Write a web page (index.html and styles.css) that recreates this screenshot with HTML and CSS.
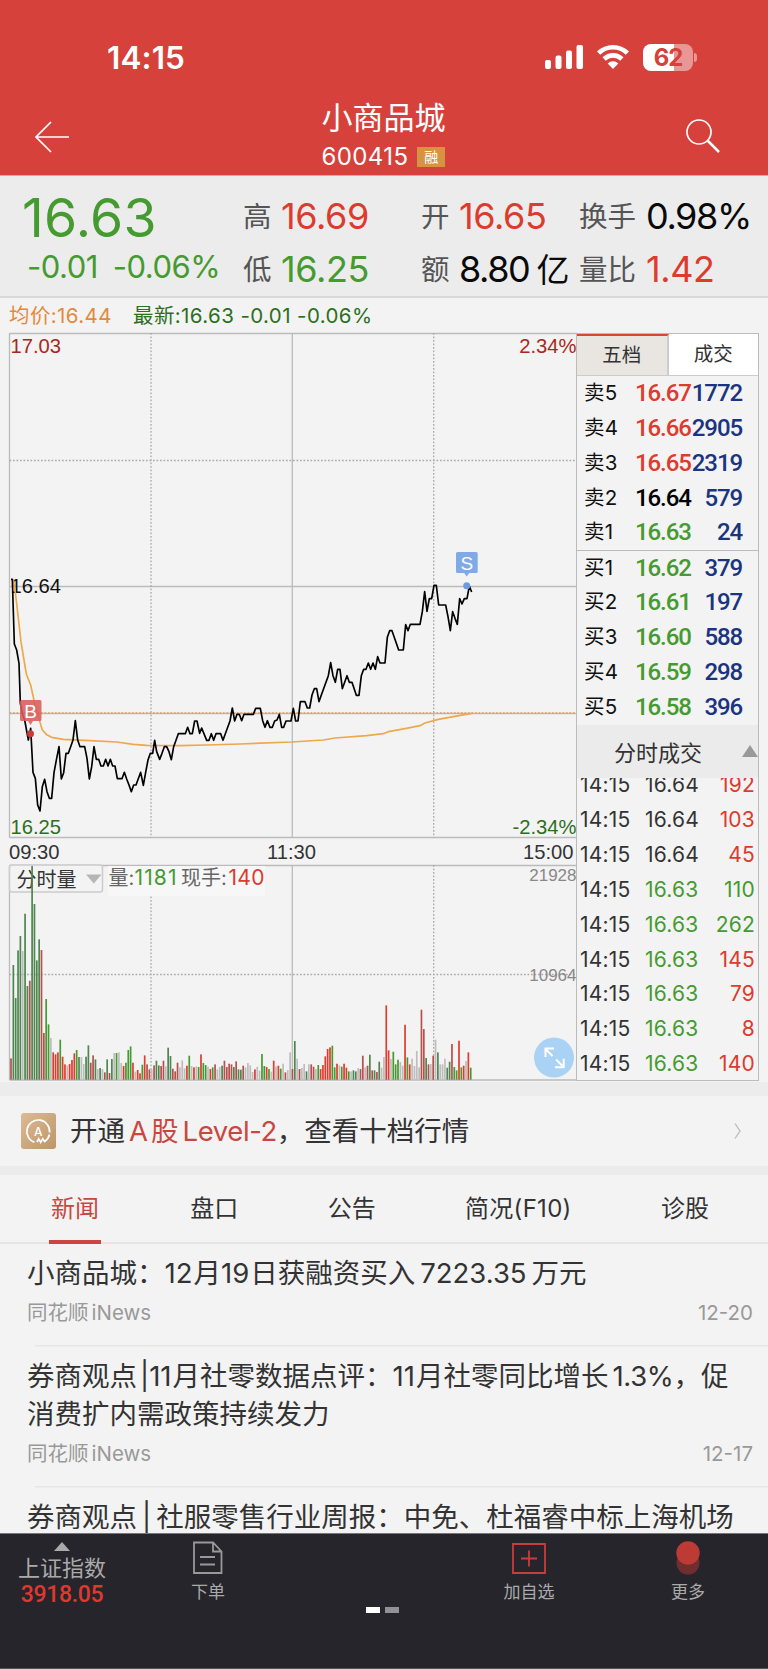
FILE: index.html
```
<!DOCTYPE html>
<html lang="zh-CN">
<head>
    <meta charset="UTF-8">
    <title>小商品城 600415</title>
    <link rel="stylesheet" href="styles.css">
</head>
<body>
    <header class="header">
        <div class="statusbar">
            <span class="clock">14:15</span>
            <div class="status-icons">
                <svg class="signal" width="39" height="26" viewBox="0 0 39 26">
                    <rect x="0" y="16" width="6" height="9" rx="2"/>
                    <rect x="10.5" y="11.500" width="6" height="13.500" rx="2"/>
                    <rect x="21" y="6.500" width="6" height="18.500" rx="2"/>
                    <rect x="31.500" y="1" width="6.500" height="24" rx="2"/>
                </svg>
                <svg class="wifi" width="34" height="26" viewBox="0 0 34 26">
                    <path d="M2.600 9.200a20.500 20.500 0 0 1 28.800 0M8.100 15a12.700 12.700 0 0 1 17.800 0" fill="none" stroke="#fff" stroke-width="4.600"/>
                    <path d="M17 25l-5.300-5.600a7.600 7.600 0 0 1 10.600 0z"/>
                </svg>
                <div class="battery"><span>6</span><span>2</span></div>
                <i class="battery-cap"></i>
            </div>
        </div>
        <div class="navbar">
            <svg class="back" width="36" height="34" viewBox="0 0 36 34">
                <path d="M35 17H2M17 2L2 17l15 15"/>
            </svg>
            <div class="stock">
                <div class="stock-name">小商品城</div>
                <div class="stock-code">600415<span class="rong">融</span></div>
            </div>
            <svg class="search" width="36" height="36" viewBox="0 0 36 36">
                <circle cx="14" cy="14" r="12"/>
                <path d="M22.500 22.500L34 34" class="handle"/>
            </svg>
        </div>
    </header>

    <section class="quote">
        <div class="now">
            <div class="price">16.63</div>
            <div class="change"><span>-0.01</span><span>-0.06%</span></div>
        </div>
        <div class="pair c1"><label>高</label><b class="red">16.69</b><label>低</label><b class="green">16.25</b></div>
        <div class="pair c2"><label>开</label><b class="red">16.65</b><label>额</label><b>8.80<i>亿</i></b></div>
        <div class="pair c3"><label>换手</label><b class="rate">0.98%</b><label>量比</label><b class="red">1.42</b></div>
    </section>

    <div class="avgline"><span class="avg">均价:16.44</span><span class="latest">最新:16.63 -0.01 -0.06%</span></div>

    <main class="board">
        <svg class="chart" width="577" height="750" viewBox="0 332 577 750">
            <g class="grid">
                <path d="M9.500 333.500H577M9.500 837.500H577M9.500 865.500H577M9.500 1080H577M9.500 333V837.500M9.500 865V1080M9.500 586.500H577M292.300 333V837.500M292.300 865V1080"/>
                <path class="dot" d="M151 333V837.500M433.700 333V837.500M151 865V1080M433.700 865V1080M9.500 460.500H577M9.500 974.500H577"/>
                <path d="M9.500 713.500H577"/>
                <path class="dot last" d="M9.500 713H577"/>
            </g>
            <!-- 价格标签 -->
            <g class="axis">
                <text x="10.500" y="352.500" class="up">17.03</text>
                <text x="576.500" y="352.500" class="up" text-anchor="end">2.34%</text>
                <text x="10.500" y="593">16.64</text>
                <text x="10.500" y="834" class="down">16.25</text>
                <text x="576.500" y="834" class="down" text-anchor="end">-2.34%</text>
                <text x="9" y="858.500" class="time">09:30</text>
                <text x="291.500" y="858.500" class="time" text-anchor="middle">11:30</text>
                <text x="573.500" y="858.500" class="time" text-anchor="end">15:00</text>
                <text x="576.500" y="881" class="vol" text-anchor="end">21928</text>
                <text x="576.500" y="980.500" class="vol" text-anchor="end">10964</text>
            </g>
            <g transform="translate(0 570) scale(.33333)">
                <polyline class="avg-curve" points="40,28 47,75 63,215 77,300 80,315 92,345 104,400 115,440 127,480 140,494 155,502 190,508 255,511 350,516 400,523 440,526 540,527 620,525 720,522 875,516 970,510 1005,504 1100,497 1150,491 1165,485 1215,476 1260,467 1275,459 1315,448 1360,440 1415,430"/>
                <polyline class="price-curve" points="33,28 37,28 43,222 50,240 57,280 61,400 68,435 74,450 85,510 92,475 99,607 106,625 113,705 120,723 127,650 134,628 141,665 148,685 155,685 162,608 170,565 177,530 184,627 191,608 198,550 205,550 212,530 219,510 226,452 233,510 240,530 254,530 261,565 268,627 275,590 282,530 289,568 296,568 303,588 310,588 317,568 324,588 331,568 338,588 345,588 352,626 366,626 373,607 380,627 387,645 394,665 401,645 408,645 422,607 430,646 437,607 444,570 451,550 458,550 464,511 470,545 479,568 486,550 493,530 500,530 507,545 514,569 521,530 535,491 556,491 563,472 570,491 577,491 584,453 591,453 599,490 605,474 620,511 627,511 634,491 641,511 648,491 662,491 669,511 676,491 690,453 697,414 704,453 711,433 718,433 725,452 732,433 760,433 767,415 781,415 788,452 795,472 802,452 810,472 817,472 824,453 831,450 838,433 845,472 851,472 858,453 873,453 880,415 887,453 894,453 901,395 915,395 922,414 929,414 936,375 943,356 950,356 957,395 964,375 985,317 992,278 999,317 1006,337 1013,298 1020,298 1027,356 1034,337 1041,317 1048,337 1056,337 1069,376 1077,376 1084,317 1091,298 1098,298 1105,279 1112,298 1119,279 1126,298 1133,260 1140,279 1155,279 1162,202 1169,182 1176,182 1196,240 1210,240 1217,164 1224,182 1231,163 1260,163 1267,125 1274,65 1281,124 1288,86 1295,86 1302,46 1309,46 1316,105 1337,105 1344,140 1351,182 1358,125 1365,145 1372,163 1379,86 1386,102 1393,86 1401,86 1408,48 1415,66"/>
            </g>
            <!-- 买卖点 -->
            <g class="mark buy">
                <path d="M21.500 700h18.500q1.500 0 1.500 1.500v18q0 1.500-1.500 1.500h-7l-2.500 4-2.500-4h-6.500q-1.500 0-1.500-1.500v-18q0-1.500 1.500-1.500z"/>
                <circle cx="30.500" cy="733.700" r="3.500"/>
                <text x="30.600" y="717.700">B</text>
            </g>
            <g class="mark sell">
                <path d="M457.500 552h18.700q1.500 0 1.500 1.500v18q0 1.500-1.500 1.500h-7l-2.500 3.500-2.500-3.500h-6.700q-1.500 0-1.500-1.500v-18q0-1.500 1.500-1.500z"/>
                <circle cx="466.700" cy="585.700" r="3.500"/>
                <text x="466.800" y="569.500">S</text>
            </g>
            <rect class="select" x="9.500" y="865" width="93" height="27" rx="2.500"/>
            <path class="select-arrow" d="M86 874.500h15.500l-7.700 9z"/>
            <rect class="tipbg" x="108" y="866" width="157" height="30"/>
            <g class="select-text">
                <text x="16.500" y="886.500">分时量</text>
                <text x="108.500" y="885" class="grey">量:</text>
                <text x="134.500" y="884.500" class="green" textLength="42">1181</text>
                <text x="181" y="885" class="grey">现手:</text>
                <text x="228.500" y="884.500" class="red" textLength="36">140</text>
            </g>
            <g id="bars"></g>
            <g class="expand">
                <circle cx="554" cy="1057.600" r="20"/>
                <path d="M552.500 1056l-7-7M545.500 1057v-8.500h8.500M556 1059.500l7.300 7.300M555 1067.300h8.700v-8.500"/>
            </g>
        </svg>

        <aside class="side">
            <div class="side-tabs"><span class="on">五档</span><span>成交</span></div>
            <ul class="orders">
                <li><span>卖5</span><b class="red">16.67</b><em>1772</em></li>
                <li><span>卖4</span><b class="red">16.66</b><em>2905</em></li>
                <li><span>卖3</span><b class="red">16.65</b><em>2319</em></li>
                <li><span>卖2</span><b>16.64</b><em>579</em></li>
                <li><span>卖1</span><b class="green">16.63</b><em>24</em></li>
            </ul>
            <ul class="orders buys">
                <li><span>买1</span><b class="green">16.62</b><em>379</em></li>
                <li><span>买2</span><b class="green">16.61</b><em>197</em></li>
                <li><span>买3</span><b class="green">16.60</b><em>588</em></li>
                <li><span>买4</span><b class="green">16.59</b><em>298</em></li>
                <li><span>买5</span><b class="green">16.58</b><em>396</em></li>
            </ul>
            <div class="deal-title">分时成交<i></i></div>
            <ul class="deals">
                <li><span>14:15</span><span>16.64</span><em class="red">192</em></li>
                <li><span>14:15</span><span>16.64</span><em class="red">103</em></li>
                <li><span>14:15</span><span>16.64</span><em class="red">45</em></li>
                <li><span>14:15</span><span class="green">16.63</span><em class="green">110</em></li>
                <li><span>14:15</span><span class="green">16.63</span><em class="green">262</em></li>
                <li><span>14:15</span><span class="green">16.63</span><em class="red">145</em></li>
                <li><span>14:15</span><span class="green">16.63</span><em class="red">79</em></li>
                <li><span>14:15</span><span class="green">16.63</span><em class="red">8</em></li>
                <li><span>14:15</span><span class="green">16.63</span><em class="red">140</em></li>
            </ul>
        </aside>
    </main>

    <div class="level2">
        <svg width="35" height="36" viewBox="0 0 35 36">
            <defs>
                <linearGradient id="gold" x1="0" y1="0" x2="1" y2="1">
                    <stop offset="0" stop-color="#dcbb94"/>
                    <stop offset="1" stop-color="#bd9569"/>
                </linearGradient>
            </defs>
            <rect width="35" height="36" rx="3" fill="url(#gold)"/>
            <path d="M13.500 29.200A11.400 11.400 0 1 1 28.600 19.500M28.500 21.500q-.8 4-4.800 7l-2-2.700-2 3.500-2-3.500-1.700 3.200" fill="none" stroke="#fff" stroke-width="1.700"/>
            <text x="17.300" y="22.500" text-anchor="middle">A</text>
        </svg>
        <p>开通<span class="a">A</span><span class="gu">股</span><span class="lv">Level-2</span>，查看十档行情</p>
        <svg class="arrow" width="8" height="18" viewBox="0 0 8 18"><path d="M1 1.500l5 7.500-5 7.500"/></svg>
    </div>

    <nav class="tabs">
        <span class="on">新闻</span>
        <span>盘口</span>
        <span>公告</span>
        <span class="f10">简况(F10)</span>
        <span>诊股</span>
    </nav>

    <div class="news">
        <article>
            <h3>小商品城：<u>12</u>月<u>19</u>日获融资买入<u class="w">7223.35</u>万元</h3>
            <div class="meta"><span>同花顺<u>iNews</u></span><time>12-20</time></div>
        </article>
        <article>
            <h3>券商观点<u class="bar">|11</u>月社零数据点评：<u>11</u>月社零同比增长<u class="pct">1.3%</u>，促<br>消费扩内需政策持续发力</h3>
            <div class="meta"><span>同花顺<u>iNews</u></span><time>12-17</time></div>
        </article>
        <article>
            <h3>券商观点<u class="bar pipe">|</u>社服零售行业周报：中免、杜福睿中标上海机场</h3>
        </article>
    </div>

    <footer class="toolbar">
        <div class="index">
            <i></i>
            <span>上证指数</span>
            <b>3918.05</b>
        </div>
        <div class="tool order">
            <svg width="32" height="34" viewBox="0 0 32 34">
                <path d="M2 1.500h19l8.500 9V32H2zM21 1.500v9h8.500M8 16h15M8 23.500h15"/>
            </svg>
            <span>下单</span>
        </div>
        <div class="tool add">
            <svg width="34" height="34" viewBox="0 0 34 34">
                <path d="M1 3h32v29H1zM17 9.500v16M9 17.500h16"/>
            </svg>
            <span>加自选</span>
        </div>
        <div class="tool more">
            <svg width="26" height="34" viewBox="0 0 26 34">
                <circle cx="13" cy="22" r="11.500" fill="#702e30"/>
                <circle cx="13" cy="12" r="11.700" fill="#bd3a35"/>
            </svg>
            <span>更多</span>
        </div>
        <div class="pager"><i class="on"></i><i></i></div>
    </footer>

    <script>
        // 分时量: r 涨 g 跌 s 平, 数字为柱高
        const volume = "r64 g344 g245 g388 g431 s386 g498 g281 r297 g641 g527 g358 g421 r389 r140 g242 g166 s125 r82 r76 r82 g120 r69 r46 s43 r47 r59 r79 g89 g68 s68 s47 g69 g103 r51 r73 g61 s32 g35 s32 r22 g61 r20 g62 s80 g80 s82 s50 r41 g51 g89 g100 r51 s24 r29 r19 g45 r73 r46 r31 s31 r43 g57 g43 r41 r57 s40 g96 g71 r33 r25 r51 s37 s58 s34 r42 g72 s41 r37 s40 g38 r76 g50 g44 s39 r32 g37 r46 s31 s38 g42 r57 r38 r48 r46 g38 r55 g31 g30 r42 s37 s50 s43 s23 r31 s39 s27 g77 g41 r38 g32 s24 r57 s40 r42 g33 s48 r22 s29 s82 r32 g116 s63 r32 s35 s47 g25 s46 r46 r39 s32 g44 r32 r44 r70 r92 r97 g102 g37 r48 s43 g39 r48 r36 g25 s25 g28 g25 s35 r32 r72 s37 r42 g75 r28 g28 r23 g54 s36 s68 r223 r88 s62 g84 g46 g60 s53 s42 r165 g67 r46 s63 s41 s86 s37 r210 r152 g65 r46 s47 r72 s120 g82 s46 s46 s63 g36 g54 r107 g38 g28 r117 g37 r42 s56 r82 g36";
        const colors = {
            r: ["#b5504c", "#dd3d2e"],
            g: ["#4f8650", "#459a30"],
            s: ["#bdbdbd", "#bdbdbd"]
        };
        let str = "";
        volume.split(" ").forEach(function (v, i) {
            var h = v.slice(1) / 3;
            var x = 11 + i * 2.3455 - 0.85;
            var color = colors[v[0]][i % 29 > 14 ? 1 : 0];
            str += `<rect x="${x.toFixed(2)}" y="${(1079.7 - h).toFixed(2)}" width="1.7" height="${h.toFixed(2)}" fill="${color}"/>`;
        });
        document.querySelector("#bars").innerHTML = str;
    </script>
</body>
</html>
```
FILE: styles.css
```
* {
    box-sizing: border-box;
}

body, html {
    margin: 0;
    padding: 0;
}
body {
    width: 768px;
    height: 1669px;
    overflow: hidden;
    background: #f3f3f3;
    color: #333;
    font-family: Inter, "Noto Sans CJK SC", sans-serif;
    display: flex;
    flex-direction: column;
}
ul {
    list-style: none;
    margin: 0;
    padding: 0;
}
i, em, u {
    font-style: normal;
    text-decoration: none;
}
.red {
    color: #dc3b2e;
}
.green {
    color: #459a30;
}

/* 头部 */
.header {
    height: 176px;
    flex: none;
    background: #d6413b;
    border-bottom: 1px solid #ee9e9a;
    color: #fff;
}
.statusbar {
    height: 98px;
    padding: 38px 71px 0 107px;
    display: flex;
    justify-content: space-between;
}
.clock {
    font-size: 31.5px;
    line-height: 39px;
    font-weight: 600;
    letter-spacing: 0.1px;
}
.status-icons {
    display: flex;
    align-items: center;
    height: 38px;
}
.status-icons svg {
    fill: #fff;
}
.wifi {
    margin-left: 12px;
}
.battery {
    width: 50px;
    height: 27px;
    margin-left: 13px;
    border-radius: 8px;
    background: linear-gradient(90deg, #fff 62%, #e99794 62%);
    color: #d6413b;
    font-size: 24px;
    font-weight: 700;
    line-height: 27px;
    text-align: center;
    letter-spacing: -1px;
}
.battery-cap {
    width: 3px;
    height: 9px;
    margin-left: 1px;
    border-radius: 0 3px 3px 0;
    background: #e99794;
}
.navbar {
    display: flex;
    justify-content: space-between;
    padding: 0 47px 0 34px;
}
.navbar svg {
    fill: none;
    stroke: #fff;
    stroke-width: 1.7;
}
.back {
    margin-top: 22px;
}
.search {
    margin-top: 20px;
}
.search .handle {
    stroke-width: 2.5;
}
.stock {
    width: 130px;
    margin-left: 16px;
}
.stock-name {
    font-size: 31px;
    line-height: 40px;
    padding-left: 1px;
    white-space: nowrap;
}
.stock-code {
    display: flex;
    align-items: center;
    font-size: 24px;
    line-height: 37px;
    letter-spacing: 0.4px;
    padding-left: 1px;
}
.rong {
    width: 28px;
    height: 20px;
    margin-left: 9px;
    background: #d69442;
    font-size: 14px;
    line-height: 20px;
    text-align: center;
}

/* 行情 */
.quote {
    height: 122px;
    flex: none;
    display: flex;
    background: #ececec;
    border-bottom: 2px solid #d8d8d8;
    padding: 14px 0 0 22px;
}
.now {
    width: 222px;
    color: #459a30;
}
.price {
    font-size: 53.5px;
    line-height: 56px;
    letter-spacing: 0.3px;
}
.change {
    display: flex;
    gap: 15px;
    padding-left: 5px;
    font-size: 31px;
    line-height: 41px;
    letter-spacing: -0.5px;
}
.pair {
    display: grid;
    grid-template-rows: 53px 53px;
    align-items: center;
}
.c1 {
    width: 178px;
    margin-left: -1px;
    grid-template-columns: 38px 1fr;
}
.c2 {
    width: 158px;
    grid-template-columns: 38px 1fr;
}
.c3 {
    width: 185px;
    grid-template-columns: 67px 1fr;
}
.pair label {
    font-size: 28.5px;
    line-height: 50px;
    color: #555;
}
.pair b {
    font-weight: 400;
    font-size: 36px;
    line-height: 48px;
    margin-top: -2px;
    letter-spacing: -0.4px;
    white-space: nowrap;
}
.pair b:not(.red):not(.green) {
    color: #0a0a0a;
    letter-spacing: -1.4px;
}
.pair .rate:not(.red) {
    letter-spacing: -1.8px;
}
.pair i {
    font-size: 33px;
    line-height: 30px;
    margin-left: 7px;
}
.avgline {
    height: 34px;
    flex: none;
    padding: 4px 0 0 9px;
    font-size: 20.5px;
    line-height: 28px;
    letter-spacing: 0.4px;
}
.avg {
    display: inline-block;
    width: 124px;
    color: #e58a3c;
}
.latest {
    color: #2c6f1d;
}

/* 分时图 */
.board {
    display: flex;
    height: 750px;
    flex: none;
}
.chart {
    flex: none;
    display: block;
}
.grid path {
    fill: none;
    stroke: #bbb;
    stroke-width: 1.3;
}
.grid .dot {
    stroke: #aaa;
    stroke-dasharray: 1.7 1.8;
}
.grid .last {
    stroke: #ea9a50;
    stroke-width: 1.7;
}
.axis text {
    font-family: "Liberation Sans", sans-serif;
    font-size: 20.2px;
    fill: #111;
}
.axis .up {
    fill: #a82820;
}
.axis .down {
    fill: #2c6f1d;
}
.axis .time {
    fill: #333;
}
.axis .vol {
    font-size: 17px;
    fill: #888;
}
.price-curve, .avg-curve {
    fill: none;
    stroke: #000;
    stroke-width: 5;
    stroke-linejoin: round;
}
.avg-curve {
    stroke: #eda84b;
}
.mark text {
    font-family: "Liberation Sans", sans-serif;
    font-size: 19px;
    text-anchor: middle;
    fill: #fff;
}
.buy path {
    fill: #d95d5c;
    fill-opacity: .88;
}
.buy circle {
    fill: #c93a38;
}
.sell path {
    fill: #7faae6;
}
.sell circle {
    fill: #6b9be0;
}
.select {
    fill: #f3f3f3;
    stroke: #ccc;
    stroke-width: 1.5;
}
.select-arrow {
    fill: #b5b5b5;
}
.tipbg {
    fill: #f7f7f7;
}
.select-text text {
    font-size: 20px;
    fill: #333;
}
.select-text .grey {
    fill: #666;
}
.select-text .green {
    font-size: 21px;
    fill: #459a30;
}
.select-text .red {
    font-size: 21px;
    fill: #dc3b2e;
}
.expand circle {
    fill: #aad2f5;
}
.expand path {
    fill: none;
    stroke: #fff;
    stroke-width: 2;
}

/* 右侧盘口 */
.side {
    width: 182px;
    height: 748px;
    margin-top: 1px;
    border: 1px solid #bbb;
    border-width: 1px 1.5px 1px 0;
    box-shadow: -1px 0 0 #bbb;
    display: flex;
    flex-direction: column;
    overflow: hidden;
}
.side-tabs {
    display: flex;
    height: 42px;
    flex: none;
    border-bottom: 1px solid #ccc;
    font-size: 19.5px;
    line-height: 41px;
    text-align: center;
}
.side-tabs span {
    flex: 1;
    background: #fff;
}
.side-tabs .on {
    background: #e9e6e2;
    border-top: 2px solid #dd4337;
    border-right: 2px solid #ccc;
    line-height: 39px;
}
.orders {
    height: 173.500px;
    flex: none;
}
.orders li {
    display: grid;
    grid-template-columns: 51px 56px 51px;
    padding-left: 7px;
    height: 34.850px;
    line-height: 34.850px;
    font-family: Roboto, sans-serif;
    font-size: 24px;
    letter-spacing: -1.1px;
}
.orders span {
    font-family: Inter, "Noto Sans CJK SC", sans-serif;
    font-size: 20.500px;
    letter-spacing: 0.2px;
    color: #111;
}
.orders b {
    font-weight: 500;
}
.orders b:not(.red):not(.green) {
    color: #000;
}
.orders em {
    font-weight: 500;
    color: #1b347f;
    text-align: right;
}
.buys {
    border-top: 1px solid #bbb;
    height: 175px;
}
.deal-title {
    height: 53px;
    flex: none;
    background: #ebebeb;
    display: flex;
    align-items: center;
    justify-content: space-between;
    padding-left: 37px;
    font-size: 22px;
}
.deal-title i {
    border: 8px solid transparent;
    border-top: 0;
    border-bottom: 12px solid #999;
}
.deals {
    overflow: hidden;
    flex: 1;
    display: flex;
    flex-direction: column;
    justify-content: flex-end;
}
.deals li {
    flex: none;
    display: grid;
    grid-template-columns: 65px 56px 1fr;
    padding: 0 3px 0 3px;
    height: 34.850px;
    line-height: 34.850px;
    font-size: 21px;
    letter-spacing: 0.2px;
}
.deals li:last-child {
    margin-bottom: -2px;
}
.deals em {
    text-align: right;
}

/* Level-2 */
.level2 {
    height: 84px;
    flex: none;
    display: flex;
    align-items: center;
    border-top: 14px solid #ececec;
    padding: 0 26px 0 21px;
}
.level2 svg {
    flex: none;
}
.level2 text {
    font-size: 12px;
    font-weight: 500;
    fill: #fff;
}
.level2 p {
    flex: 1;
    margin: 0 0 0 14px;
    font-size: 27.500px;
    line-height: 40px;
    white-space: nowrap;
}
.level2 p span {
    color: #c94740;
}
.level2 .a {
    margin-left: 4px;
}
.level2 .gu {
    margin: 0 4px 0 3px;
}
.level2 .lv {
    letter-spacing: -0.4px;
}
.arrow path {
    fill: none;
    stroke: #bbb;
    stroke-width: 1.3;
}

/* 新闻 */
.tabs {
    height: 78px;
    flex: none;
    display: flex;
    justify-content: space-between;
    border-top: 9px solid #ebebeb;
    border-bottom: 2px solid #e4e4e4;
    padding: 0 59px 0 49px;
    font-size: 24px;
    line-height: 68px;
}
.tabs .on {
    height: 69px;
    padding: 0 2px;
    color: #c94740;
    border-bottom: 4px solid #c94740;
}
.f10 {
    letter-spacing: 0.3px;
}
.news {
    height: 289px;
    flex: none;
    overflow: hidden;
}
.news article {
    padding-left: 27px;
    background: linear-gradient(#e6e6e6, #e6e6e6) 35px 100% / 100% 1.5px no-repeat;
}
.news h3 {
    margin: 0;
    padding-top: 10px;
    font-size: 27.500px;
    font-weight: 400;
    line-height: 38.500px;
    white-space: nowrap;
}
.news h3 u {
    letter-spacing: 0;
    margin-right: 1px;
}
.news h3 .w {
    margin: 0 5px;
}
.news h3 .bar {
    margin-left: 3px;
}
.news h3 .pipe {
    margin: 0 5px;
}
.news h3 .pct {
    margin: 0 0 0 4px;
    letter-spacing: -0.3px;
}
.meta {
    display: flex;
    justify-content: space-between;
    height: 54px;
    padding: 5px 15px 0 0;
    font-size: 20.500px;
    line-height: 29px;
    color: #999;
}
.meta u {
    margin-left: 3px;
}

/* 底部 */
.toolbar {
    height: 136px;
    flex: none;
    display: grid;
    grid-template-columns: 124px 168px 178px 118px 180px;
    grid-template-rows: 73px auto;
    background: #26252b;
    border-top: 1px solid #77767b;
    border-bottom: 1px solid #55545a;
    color: #aaa;
}
.index {
    display: flex;
    flex-direction: column;
    align-items: center;
    padding-top: 8px;
    font-size: 22px;
}
.index i {
    border: 8px solid transparent;
    border-top: 0;
    border-bottom: 9px solid #aaa;
}
.index span {
    line-height: 30px;
    margin-top: 2px;
}
.index b {
    font-family: Roboto, sans-serif;
    font-size: 23px;
    line-height: 24px;
    font-weight: 500;
    letter-spacing: -0.3px;
    color: #df392e;
}
.tool {
    display: flex;
    flex-direction: column;
    align-items: center;
    padding-top: 7px;
    font-size: 17px;
    line-height: 24px;
}
.tool span {
    margin-top: 5px;
}
.tool svg path {
    fill: none;
    stroke: #999;
    stroke-width: 1.800;
}
.add {
    grid-column: 4;
}
.add svg path {
    stroke: #c83e3a;
}
.more {
    grid-column: 5;
    padding-left: 20px;
}
.pager {
    grid-column: 1 / 6;
    grid-row: 2;
    display: flex;
    gap: 5px;
    padding-left: 366px;
}
.pager i {
    width: 14px;
    height: 6px;
    background: #929195;
}
.pager .on {
    background: #fff;
}
```
